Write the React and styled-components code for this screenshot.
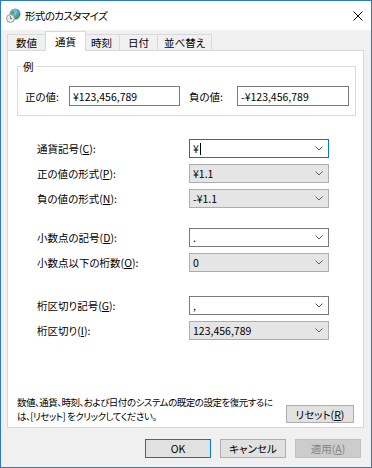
import styled, { createGlobalStyle } from "styled-components";

const GlobalStyle = createGlobalStyle`
  html, body {
    margin: 0;
    padding: 0;
    background: #fff;
  }
  body {
    font-family: "Noto Sans CJK JP", "Noto Sans", sans-serif;
    font-size: 10.5px;
    line-height: 13px;
    color: #000;
    font-feature-settings: "palt";
  }
  * {
    box-sizing: border-box;
  }
`;

const Window = styled.div`
  width: 372px;
  height: 468px;
  border: 1px solid #2b79d0;
  background: #f0f0f0;
  display: flex;
  flex-direction: column;
`;

const TitleBar = styled.div`
  height: 29px;
  background: #fff;
  display: flex;
  align-items: center;
  padding: 0 8px 0 5px;
`;

const Title = styled.div`
  margin-left: 4px;
  flex: 1;
  letter-spacing: -0.6px;
`;

const Body = styled.div`
  flex: 1;
  display: flex;
  flex-direction: column;
  padding: 0 7px 0 6px;
`;

const TabRow = styled.div`
  display: flex;
  align-items: flex-end;
  height: 21px;
  padding-left: 1px;
  margin-bottom: -1px;
  position: relative;
  z-index: 1;
`;

const Tab = styled.div`
  height: ${(p) => (p.$active ? 20 : 17)}px;
  padding: 0 ${(p) => (p.$active ? 8 : 6)}px;
  margin: 0 ${(p) => (p.$active ? -2 : 0)}px 0 -1px;
  background: ${(p) => (p.$active ? "#fff" : "#f0f0f0")};
  border: 1px solid #d9d9d9;
  border-bottom: ${(p) => (p.$active ? "none" : "1px solid #d9d9d9")};
  position: relative;
  z-index: ${(p) => (p.$active ? 2 : 1)};
  display: flex;
  align-items: center;
  justify-content: center;
  min-width: ${(p) => p.$w}px;
`;

const Panel = styled.div`
  flex: 1;
  background: #fff;
  border: 1px solid #d9d9d9;
  display: flex;
  flex-direction: column;
`;

const Group = styled.fieldset`
  margin: 9px 7px 0 9px;
  border: 1px solid #dcdcdc;
  padding: 13px 6px 9px 7px;
  min-width: 0;
`;

const Legend = styled.legend`
  padding: 0 2px;
  margin-left: -4px;
  line-height: 13px;
`;

const SampleRow = styled.div`
  display: flex;
  align-items: center;
`;

const SampleLabel = styled.div`
  width: ${(p) => p.$w}px;
  margin-left: ${(p) => p.$gap || 0}px;
`;

const TextBox = styled.div`
  width: ${(p) => p.$w}px;
  height: 20px;
  border: 1px solid #7a7a7a;
  background: #fff;
  display: flex;
  align-items: center;
  padding: 0 3px;
`;

const Section = styled.div`
  display: grid;
  grid-template-columns: 152px 140px;
  row-gap: 6px;
  align-items: center;
  padding-left: 29px;
  margin-top: ${(p) => p.$top}px;
`;

const Label = styled.div``;

const Key = styled.span`
  text-decoration: underline;
`;

const Combo = styled.div`
  height: 19px;
  display: flex;
  align-items: center;
  padding: 0 5px 0 3px;
  border: 1px solid
    ${(p) => (p.$focused ? "#0078d7" : p.$editable ? "#7a7a7a" : "#adadad")};
  background: ${(p) => (p.$editable ? "#fff" : "#e5e5e5")};
`;

const ComboText = styled.div`
  flex: 1;
  display: flex;
  align-items: center;
`;

const Caret = styled.span`
  display: inline-block;
  width: 1px;
  height: 12px;
  background: #000;
  margin-left: 1px;
`;

const BottomRow = styled.div`
  margin-top: auto;
  display: flex;
  align-items: flex-end;
  justify-content: space-between;
  padding: 0 9px 4px 9px;
`;

const Note = styled.div`
  font-size: 9.5px;
  line-height: 14px;
  letter-spacing: -0.5px;
  white-space: nowrap;
`;

const Button = styled.div`
  width: ${(p) => p.$w || 66}px;
  height: ${(p) => p.$h || 19}px;
  flex-shrink: 0;
  display: flex;
  align-items: center;
  justify-content: center;
  background: ${(p) => (p.$disabled ? "#cccccc" : "#e1e1e1")};
  border: 1px solid
    ${(p) => (p.$default ? "#0078d7" : p.$disabled ? "#bfbfbf" : "#adadad")};
  color: ${(p) => (p.$disabled ? "#838383" : "#000")};
`;

const Footer = styled.div`
  display: flex;
  justify-content: flex-end;
  gap: 9px;
  padding: 11px 3px 9px 0;
`;

const Chevron = () => (
  <svg width="8" height="5" viewBox="0 0 8 5">
    <path d="M0.5 0.5 L4 4 L7.5 0.5" fill="none" stroke="#606060" strokeWidth="1" />
  </svg>
);

const AppIcon = () => (
  <svg width="15" height="15" viewBox="0 0 15 15">
    <defs>
      <radialGradient id="globe" cx="0.4" cy="0.35" r="0.7">
        <stop offset="0" stopColor="#9fd6f5" />
        <stop offset="1" stopColor="#1f6fb8" />
      </radialGradient>
    </defs>
    <circle cx="9" cy="6" r="5.5" fill="url(#globe)" />
    <path d="M6 3 C7.5 2.5 9 3.5 8.5 5 C8 6.5 6.5 6 6 7.5 C5 6 5 4 6 3 Z" fill="#4caf3c" />
    <path d="M10.5 6.5 C12 6 13.5 7 13 8.5 C12 10 10.5 10 10 9 Z" fill="#4caf3c" />
    <circle cx="4.5" cy="10.5" r="4" fill="#e8e8e8" stroke="#8a8a8a" strokeWidth="0.8" />
    <path d="M4.5 8.3 V10.5 H6.2" fill="none" stroke="#555" strokeWidth="0.8" />
  </svg>
);

const CloseIcon = () => (
  <svg width="10" height="10" viewBox="0 0 10 10">
    <path d="M0.5 0.5 L9.5 9.5 M9.5 0.5 L0.5 9.5" stroke="#000" strokeWidth="1" />
  </svg>
);

const App = () => {
  return (
    <>
      <GlobalStyle />
      <Window>
        <TitleBar>
          <AppIcon />
          <Title>形式のカスタマイズ</Title>
          <CloseIcon />
        </TitleBar>
        <Body>
          <TabRow>
            <Tab $w={39}>数値</Tab>
            <Tab $active $w={41}>通貨</Tab>
            <Tab $w={37}>時刻</Tab>
            <Tab $w={39}>日付</Tab>
            <Tab $w={44}>並べ替え</Tab>
          </TabRow>
          <Panel>
            <Group>
              <Legend>例</Legend>
              <SampleRow>
                <SampleLabel $w={44}>正の値:</SampleLabel>
                <TextBox $w={111}>¥123,456,789</TextBox>
                <SampleLabel $w={48} $gap={9}>負の値:</SampleLabel>
                <TextBox $w={112}>-¥123,456,789</TextBox>
              </SampleRow>
            </Group>

            <Section $top={23}>
              <Label>通貨記号(<Key>C</Key>):</Label>
              <Combo $editable $focused>
                <ComboText>¥<Caret /></ComboText>
                <Chevron />
              </Combo>
              <Label>正の値の形式(<Key>P</Key>):</Label>
              <Combo>
                <ComboText>¥1.1</ComboText>
                <Chevron />
              </Combo>
              <Label>負の値の形式(<Key>N</Key>):</Label>
              <Combo>
                <ComboText>-¥1.1</ComboText>
                <Chevron />
              </Combo>
            </Section>

            <Section $top={20}>
              <Label>小数点の記号(<Key>D</Key>):</Label>
              <Combo $editable>
                <ComboText>.</ComboText>
                <Chevron />
              </Combo>
              <Label>小数点以下の桁数(<Key>O</Key>):</Label>
              <Combo>
                <ComboText>0</ComboText>
                <Chevron />
              </Combo>
            </Section>

            <Section $top={24}>
              <Label>桁区切り記号(<Key>G</Key>):</Label>
              <Combo $editable>
                <ComboText>,</ComboText>
                <Chevron />
              </Combo>
              <Label>桁区切り(<Key>I</Key>):</Label>
              <Combo>
                <ComboText>123,456,789</ComboText>
                <Chevron />
              </Combo>
            </Section>

            <BottomRow>
              <Note>
                数値、通貨、時刻、および日付のシステムの既定の設定を復元するに
                <br />
                は、[リセット] をクリックしてください。
              </Note>
              <Button $w={68} $h={18}>リセット(<Key>R</Key>)</Button>
            </BottomRow>
          </Panel>
          <Footer>
            <Button $default>OK</Button>
            <Button>キャンセル</Button>
            <Button $disabled>適用(<Key>A</Key>)</Button>
          </Footer>
        </Body>
      </Window>
    </>
  );
};

export default App;
